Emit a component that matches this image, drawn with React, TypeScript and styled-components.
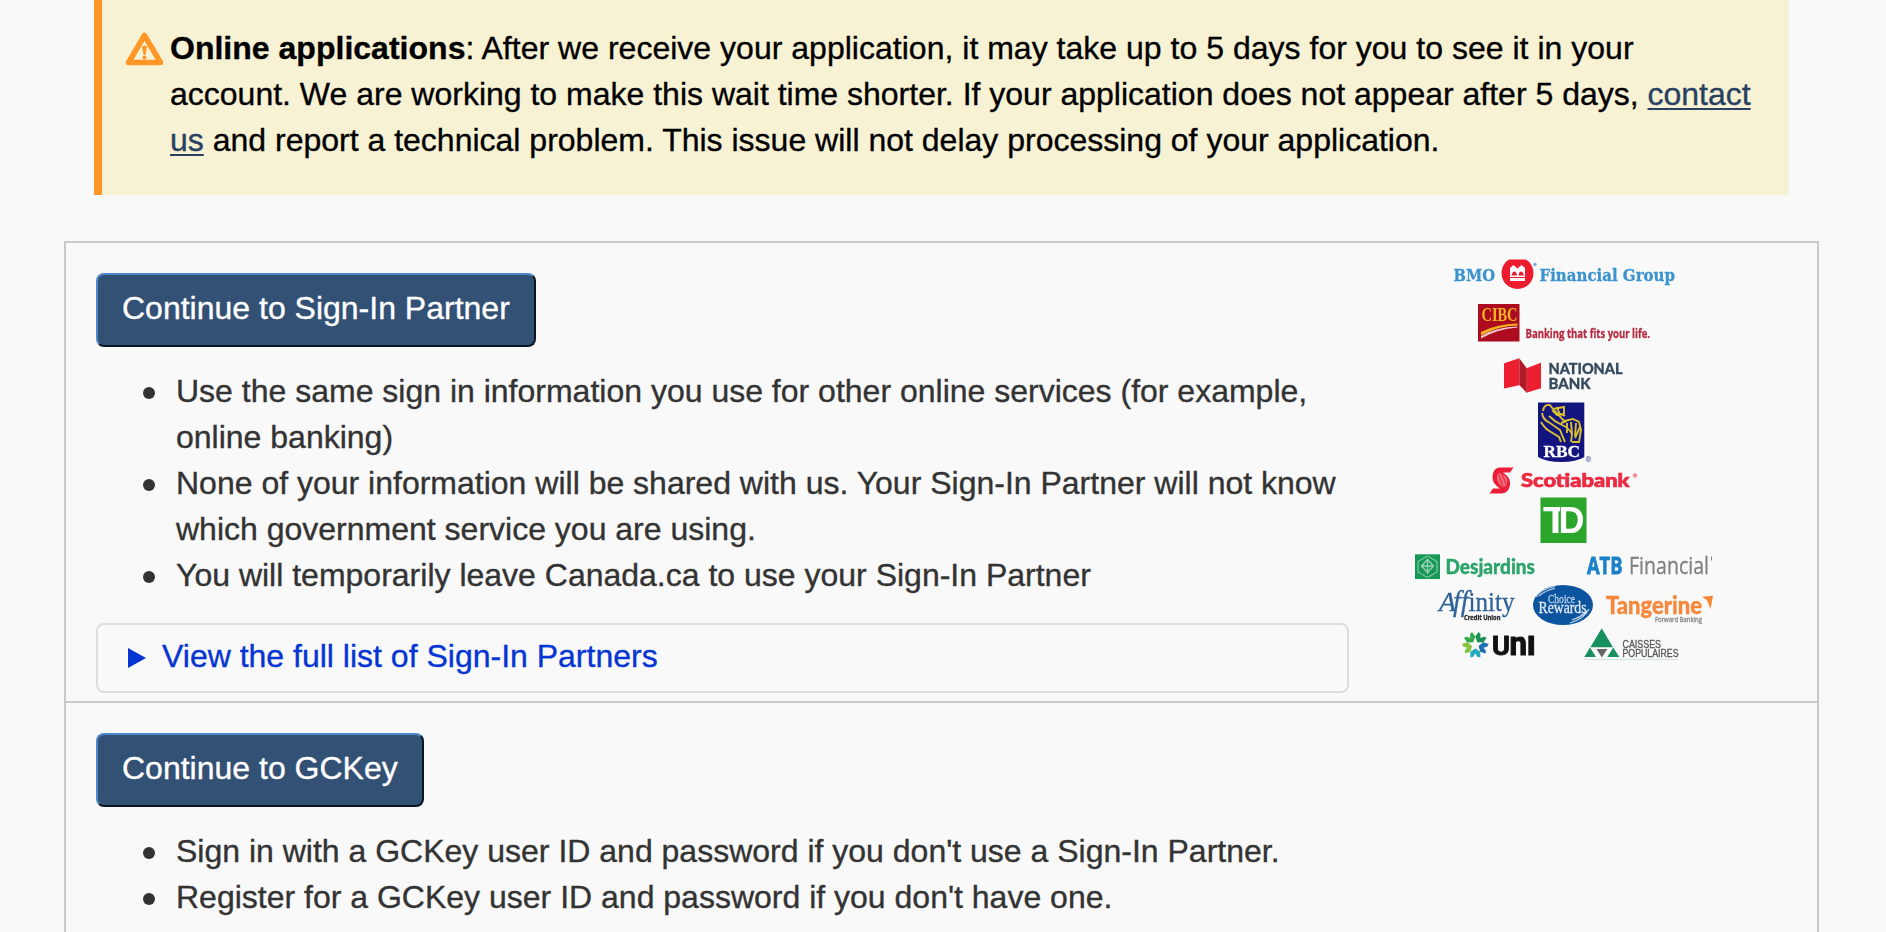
import React from "react";
import styled, { createGlobalStyle } from "styled-components";

const GlobalStyle = createGlobalStyle`
  * { box-sizing: border-box; }
  html, body { margin: 0; padding: 0; background: #f9f9f9; }
  body {
    height: 932px;
    overflow: hidden;
    font-family: Helvetica, "Liberation Sans", Arial, sans-serif;
    font-size: 32px;
    line-height: 46px;
    color: #333;
    -webkit-text-stroke: 0.35px currentColor;
  }
`;

const Page = styled.main`
  width: 1886px;
  height: 932px;
  overflow: hidden;
  background: #f9f9f9;
`;

const Alert = styled.section`
  display: flex;
  width: 1695px;
  height: 195px;
  margin-left: 94px;
  padding: 25px 32px 32px 24px;
  border-left: 8px solid #ff9626;
  background: #f8f2d5;
  color: #000;
`;

const AlertIcon = styled.svg`
  flex: none;
  width: 38px;
  height: 34px;
  margin: 7px 7px 0 -1px;
`;

const AlertText = styled.p`
  flex: 1;
  margin: 0;
`;

const Line = styled.span<{ $spacing?: number }>`
  display: block;
  white-space: nowrap;
  letter-spacing: ${(p) => (p.$spacing ? `${p.$spacing}px` : "normal")};
`;

const Link = styled.a`
  color: #284162;
  text-decoration: underline;
  text-decoration-thickness: 2px;
  text-underline-offset: 3px;
`;

const Options = styled.section`
  width: 1755px;
  height: 760px;
  margin: 46px 0 0 64px;
  border: 2px solid #c8c8c8;
`;

const Option = styled.div<{ $divided?: boolean }>`
  display: flex;
  align-items: flex-start;
  height: 460px;
  padding: 30px 0 0 30px;
  border-bottom: ${(p) => (p.$divided ? "2px solid #c8c8c8" : "none")};
`;

const OptionBody = styled.div`
  width: 1253px;
`;

const Button = styled.button<{ $width: number }>`
  display: block;
  width: ${(p) => p.$width}px;
  height: 74px;
  padding: 10px 24px 14px;
  border: 2px solid;
  border-color: #4f88ca #0a1624 #0a1624 #4f88ca;
  border-radius: 8px;
  background: #335075;
  color: #fff;
  font: inherit;
  text-align: left;
  white-space: nowrap;
`;

const List = styled.ul`
  margin: 21px 0 0;
  padding: 0 0 0 80px;
  list-style: none;
`;

const Item = styled.li`
  display: flex;
  &::before {
    content: "";
    flex: none;
    width: 12px;
    height: 12px;
    margin: 19px 21px 0 -33px;
    border-radius: 50%;
    background: #333;
  }
`;

const Disclosure = styled.div`
  display: flex;
  align-items: center;
  height: 70px;
  margin-top: 25px;
  padding: 0 0 5px 30px;
  border: 2px solid #ddd;
  border-radius: 8px;
  color: #0535d2;
`;

const Arrow = styled.span`
  width: 0;
  height: 0;
  margin: 5px 16px 0 0;
  border-left: 18px solid #0535d2;
  border-top: 10.5px solid transparent;
  border-bottom: 10.5px solid transparent;
`;

const Logos = styled.svg`
  flex: none;
  width: 330px;
  height: 420px;
  margin: -23px 0 0 51px;
  -webkit-text-stroke: 0;
`;

const Softened = styled.g`
  filter: blur(0.65px);
`;

type MarkProps = {
  x: number;
  y: number;
  w: number;
  size: number;
  fill: string;
  family?: string;
  weight?: number;
  style?: string;
  outline?: number;
  children: string;
};

const SERIF = '"Liberation Serif", serif';
const SLAB = '"DejaVu Serif", serif';
const SANS = '"Open Sans", sans-serif';
const ARIAL = '"Liberation Sans", sans-serif';
const LATO = "Lato, sans-serif";
const ROBOTO = "Roboto, sans-serif";

const Wordmark = styled.text<{ $outline: number }>`
  stroke: currentColor;
  stroke-width: ${(p) => p.$outline}px;
`;

const Mark = ({ x, y, w, size, fill, family = SANS, weight = 700, style, outline = 0.3, children }: MarkProps) => (
  <Wordmark
    $outline={outline}
    x={x}
    y={y}
    textLength={w}
    lengthAdjust="spacingAndGlyphs"
    fontSize={size}
    fill={fill}
    color={fill}
    fontFamily={family}
    fontWeight={weight}
    fontStyle={style}
  >
    {children}
  </Wordmark>
);

const PETALS = ["#1d8f58", "#1b6fb0", "#25a9bd", "#86c440", "#35a84a"];

const PartnerLogos = () => (
  <Logos viewBox="1400 250 330 420" role="img" aria-label="Sign-In Partners">
    <Softened>
      <Mark x={1453.5} y={281} w={41.5} size={17} fill="#3a93cf" family={SLAB}>BMO</Mark>
      <path d="M1509 259.500h17a16 16 0 1 1-17 0z" fill="#ed1b2e" />
      <path d="M1510 281v-13l3.500-3 4 3.500 4-3.500 3.500 3v13z" fill="#fff" />
      <path d="M1511.500 275.500q1-4 3-4t2.500 4zM1518.500 275.500q.5-4 2.500-4t3 4zM1510 277h15v1h-15z" fill="#ed1b2e" />
      <circle cx="1535" cy="264.500" r="1.800" fill="#75b5df" />
      <Mark x={1539.5} y={281} w={135.5} size={17} fill="#3a93cf" family={SLAB}>Financial Group</Mark>

      <path d="M1478 304h41.500v37.500H1478z" fill="#ad0c20" />
      <Mark x={1481.5} y={321} w={36} size={18} fill="#f2b824" family={SERIF} outline={0}>CIBC</Mark>
      <path d="M1481 332q15-8 36.500-8.500v2q-20 .5-36.500 10z" fill="#f4b31d" />
      <path d="M1481 336q15-9 36.500-9.500v1q-20 1.500-36.500 11z" fill="#e9c5ca" />
      <Mark x={1525.5} y={338} w={124.5} size={12.5} fill="#b52a40">Banking that fits your life.</Mark>

      <path d="M1504 363.300l15.300-5v27L1504 388.500zM1526.500 368.300l14.500-5.600v25.600l-14.500 4.400z" fill="#eb1f30" />
      <path d="M1519.300 358.300l7.400 10v24.400l-7.400-7.700z" fill="#ad1a28" />
      <Mark x={1548.5} y={374.3} w={74} size={15.5} fill="#34495e" family={LATO} weight={900}>NATIONAL</Mark>
      <Mark x={1548.5} y={388.6} w={42} size={15.5} fill="#34495e" family={LATO} weight={900}>BANK</Mark>

      <path d="M1538 402.500h46.300v54.500q-8 5-23 5t-23.300-5z" fill="#14147f" />
      <path
        d="M1543 411q1-7 7-6l3 4 11-2v7l-7 1-5-5M1542 413q1 7 8 10l10 7 5 12M1541 422q4 7 10 10l8 5 2 5M1549 416q6 6 13 9t10 9l-1 8M1554 410l10 11 9-2 6 3 2 8-2 12h-7M1558 413l7 3M1567 423v10M1571 422l1 12M1576 423l-1 13M1580 427l-5 11M1557 407l3 8M1561 423l6-2"
        fill="none"
        stroke="#d8c02f"
        strokeWidth="1.900"
      />
      <Mark x={1543.5} y={456.7} w={36.5} size={16} fill="#fff" family={SERIF}>RBC</Mark>
      <text x="1585.500" y="462" fontSize="7" fontWeight="700" fill="#5a5aa4" fontFamily={SANS}>®</text>

      <path d="M1499 467.500h14.500l-3.500 5h-7q8 5 7 12-1 9-9 9h-11.500l3.500-5h7q-8-5-7.500-12 .5-8 6.500-9z" fill="#ec1d36" />
      <path d="M1497 476q1-4 5-2 7 3 5 10-2 4-5 3-6-5-5-11z" fill="#f06a79" />
      <path d="M1499 475l4 12M1502 474l4 10" stroke="#ec1d36" />
      <Mark x={1521} y={487.3} w={108.5} size={19.5} fill="#ec2a42" family={LATO} weight={900} outline={0.7}>Scotiabank</Mark>
      <circle cx="1635" cy="475.500" r="1.800" fill="#f79aa6" stroke="#f28290" strokeWidth="1" />

      <path d="M1540.500 497.500h46v45.500h-46z" fill="#2ba52b" />
      <Mark x={1543} y={533} w={25} size={36} fill="#fff" family={ARIAL} outline={0}>T</Mark>
      <text x="1558.500" y="533" textLength="26" lengthAdjust="spacingAndGlyphs" fontSize="36" fontWeight="700" fill="#fff" stroke="#2ba52b" strokeWidth="1.500" paintOrder="stroke" fontFamily={ARIAL}>D</text>

      <path d="M1415 554.300h25v24.700h-25z" fill="#189858" />
      <path d="M1427.500 556l9.500 5.500v10.500l-9.500 5.500-9.500-5.500v-10.500z" fill="none" stroke="#9ad3b5" />
      <path d="M1427.500 559.500l6 6.500-6 6.500-6-6.500zM1427.500 559v15M1421 566h13" fill="none" stroke="#9ad3b5" strokeWidth="1.300" />
      <Mark x={1445.5} y={574} w={89.5} size={20.5} fill="#2aa468" family={LATO} weight={900}>Desjardins</Mark>

      <Mark x={1587} y={574.3} w={35.5} size={24} fill="#1b80c8" outline={0.8}>ATB</Mark>
      <Mark x={1629} y={574.3} w={80} size={24} fill="#7d8084" weight={400}>Financial</Mark>
      <path d="M1711.500 556.500v4" stroke="#7d8084" />

      <Mark x={1439} y={610.5} w={17} size={28} fill="#2e6399" family={SERIF} weight={400} style="italic">A</Mark>
      <Mark x={1453} y={611} w={15.5} size={30} fill="#2e6399" family={SERIF} weight={400} style="italic">ff</Mark>
      <Mark x={1468.5} y={610.5} w={46} size={28} fill="#2e6399" family={SERIF} weight={400}>inity</Mark>
      <Mark x={1464} y={620.3} w={36.5} size={7} fill="#222">Credit Union</Mark>

      <ellipse cx="1563" cy="605" rx="30" ry="20" fill="#0d549f" />
      <path d="M1536 597q5-8 19-10.500M1539 596q7-6 16-7.500M1570 623q14-4 19-14M1572 620q9-3 15-9" fill="none" stroke="#c8daec" strokeWidth="1.200" />
      <Mark x={1548} y={602.5} w={27} size={11.5} fill="#b7cfe6" family={SERIF} weight={400}>Choice</Mark>
      <Mark x={1538.5} y={613.3} w={48} size={17} fill="#e3edf6" family={SERIF} weight={400}>Rewards</Mark>

      <Mark x={1606} y={614} w={96} size={24} fill="#f7873a" family={LATO} weight={900}>Tangerine</Mark>
      <path d="M1702 596.700l11-1-2.500 13.500-3.500-9z" fill="#f7873a" />
      <Mark x={1655} y={621.5} w={47} size={6.5} fill="#888" weight={400}>Forward Banking</Mark>

      {PETALS.map((color, i) => (
        <path
          key={color}
          d="M1475.300 641.500l-5-3.300v-5.700l3 .8 2 3.200 2-3.200 3-.8v5.700z"
          fill={color}
          transform={`rotate(${36 + i * 72} 1475.300 645)`}
        />
      ))}
      <Mark x={1492} y={654.5} w={18} size={25} fill="#111" family={ROBOTO} outline={0.8}>U</Mark>
      <g transform="translate(0 654.500) scale(1 1.320)">
        <Mark x={1509.5} y={0} w={17.5} size={25} fill="#111" family={ROBOTO} outline={0.8}>n</Mark>
      </g>
      <Mark x={1526.5} y={654.5} w={9.5} size={25} fill="#111" family={ROBOTO} outline={0.8}>I</Mark>

      <path d="M1601.700 628.300l11.300 19h-22.600zM1590 647.500l6 9.500h-11.700zM1613.300 647.500l6 9.500h-12z" fill="#17905e" />
      <path d="M1596.500 649h10.800l-5.400 8.500z" fill="#666" />
      <path d="M1584 659.500h94" stroke="#cfe4dc" />
      <Mark x={1622.5} y={648.3} w={38.5} size={10} fill="#555" family={ARIAL} weight={400}>CAISSES</Mark>
      <Mark x={1622.5} y={657.3} w={56} size={10} fill="#555" family={ARIAL} weight={400}>POPULAIRES</Mark>
    </Softened>
  </Logos>
);

export default function App() {
  return (
    <Page>
      <GlobalStyle />
      <Alert>
        <AlertIcon viewBox="0 0 38 34" aria-hidden="true">
          <path d="M19.500 3.500L35.500 30.500H3.500z" fill="none" stroke="#ff9626" strokeWidth="5.500" strokeLinejoin="round" />
          <path d="M17 14.500q2.500-2 5 0l-1.500 8.500h-2z" fill="#ff9626" />
          <circle cx="19.500" cy="25.500" r="2" fill="#ff9626" />
        </AlertIcon>
        <AlertText>
          <Line $spacing={0.015}><strong>Online applications</strong>: After we receive your application, it may take up to 5 days for you to see it in your</Line>
          <Line>account. We are working to make this wait time shorter. If your application does not appear after 5 days, <Link>contact</Link></Line>
          <Line><Link>us</Link> and report a technical problem. This issue will not delay processing of your application.</Line>
        </AlertText>
      </Alert>
      <Options>
        <Option $divided>
          <OptionBody>
            <Button $width={440}>Continue to Sign-In Partner</Button>
            <List>
              <Item>
                <div>
                  <Line>Use the same sign in information you use for other online services (for example,</Line>
                  <Line>online banking)</Line>
                </div>
              </Item>
              <Item>
                <div>
                  <Line>None of your information will be shared with us. Your Sign-In Partner will not know</Line>
                  <Line>which government service you are using.</Line>
                </div>
              </Item>
              <Item><Line>You will temporarily leave Canada.ca to use your Sign-In Partner</Line></Item>
            </List>
            <Disclosure>
              <Arrow />
              View the full list of Sign-In Partners
            </Disclosure>
          </OptionBody>
          <PartnerLogos />
        </Option>
        <Option>
          <OptionBody>
            <Button $width={328}>Continue to GCKey</Button>
            <List>
              <Item><Line>Sign in with a GCKey user ID and password if you don't use a Sign-In Partner.</Line></Item>
              <Item><Line>Register for a GCKey user ID and password if you don't have one.</Line></Item>
            </List>
          </OptionBody>
        </Option>
      </Options>
    </Page>
  );
}
